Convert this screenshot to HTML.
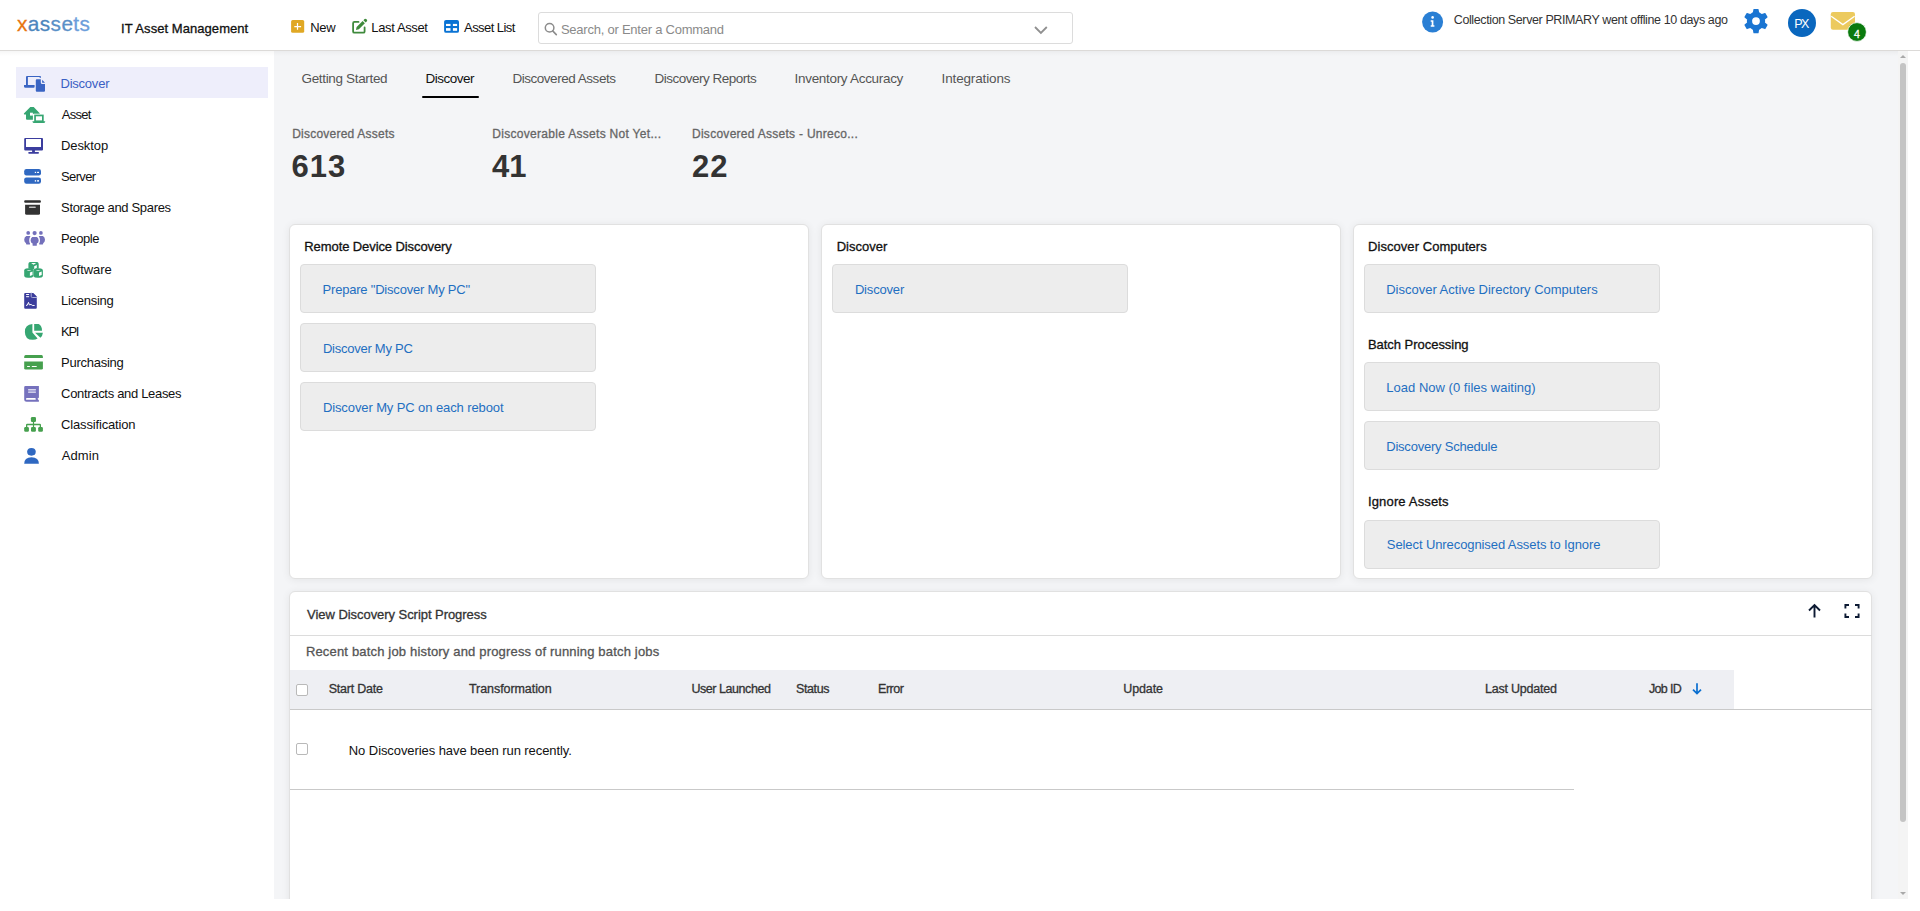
<!DOCTYPE html>
<html><head><meta charset="utf-8"><title>xAssets - Discover</title>
<style>
html,body{margin:0;padding:0;width:1920px;height:911px;overflow:hidden;background:#fff;font-family:"Liberation Sans",sans-serif;}
.t{position:absolute;white-space:nowrap;line-height:1.15;}
.abs{position:absolute;}
svg{position:absolute;overflow:visible;}
#header{position:absolute;left:0;top:0;width:1920px;height:50px;background:#fff;border-bottom:1px solid #dcdad8;}
#sidebar{position:absolute;left:0;top:51px;width:274px;height:848px;background:#fff;}
#main{position:absolute;left:274px;top:51px;width:1634px;height:848px;background:#f4f5f7;overflow:hidden;}
.navact{position:absolute;left:16px;top:67px;width:252px;height:31px;background:#eeeefb;}
.card{position:absolute;background:#fff;border:1px solid #e1e1e1;border-radius:6px;box-shadow:0 1px 8px rgba(0,0,0,.07);box-sizing:border-box;}
.btn{position:absolute;background:#ededed;border:1px solid #dcdcdc;border-radius:4px;box-sizing:border-box;}
.cb{position:absolute;width:12px;height:12px;border:1px solid #b9b9b9;border-radius:2px;box-sizing:border-box;background:#fff;}
</style></head>
<body>
<div id="header"></div>
<div id="sidebar"></div>
<div id="main"></div>
<div class="abs" style="left:0;top:51px;width:1908px;height:5px;background:linear-gradient(rgba(0,0,0,.035),rgba(0,0,0,0));"></div>
<div class="navact"></div>

<!-- tab underline -->
<div class="abs" style="left:422px;top:96px;width:57px;height:2px;background:#000;border-radius:1px;"></div>

<!-- cards -->
<div class="card" style="left:289px;top:224px;width:520px;height:355px;"></div>
<div class="card" style="left:821px;top:224px;width:520px;height:355px;"></div>
<div class="card" style="left:1353px;top:224px;width:520px;height:355px;"></div>

<div class="btn" style="left:300px;top:264px;width:296px;height:49px;"></div>
<div class="btn" style="left:300px;top:323px;width:296px;height:49px;"></div>
<div class="btn" style="left:300px;top:382px;width:296px;height:49px;"></div>
<div class="btn" style="left:832px;top:264px;width:296px;height:49px;"></div>
<div class="btn" style="left:1364px;top:264px;width:296px;height:49px;"></div>
<div class="btn" style="left:1364px;top:362px;width:296px;height:49px;"></div>
<div class="btn" style="left:1364px;top:421px;width:296px;height:49px;"></div>
<div class="btn" style="left:1364px;top:520px;width:296px;height:49px;"></div>

<!-- bottom card -->
<div class="card" style="left:289px;top:591px;width:1583px;height:340px;border-radius:6px 6px 0 0;"></div>
<div class="abs" style="left:290px;top:635px;width:1582px;height:1px;background:#dcdcdc;"></div>
<div class="abs" style="left:290px;top:670px;width:1444px;height:39px;background:#eeeff3;"></div>
<div class="abs" style="left:290px;top:709px;width:1582px;height:1px;background:#c9c9c9;"></div>
<div class="abs" style="left:290px;top:789px;width:1284px;height:1px;background:#c9c9c9;"></div>
<div class="cb" style="left:296px;top:684px;"></div>
<div class="cb" style="left:296px;top:743px;"></div>

<!-- bottom white strip over main -->
<div class="abs" style="left:0;top:899px;width:1920px;height:12px;background:#fff;"></div>
<div class="abs" style="left:1908px;top:51px;width:12px;height:848px;background:#fff;"></div>

<!-- scrollbar -->
<div class="abs" style="left:1898px;top:51px;width:10px;height:848px;background:#f4f4f4;"></div>
<div class="abs" style="left:1900px;top:63px;width:6px;height:759px;background:#c4c4c4;border-radius:3px;"></div>
<svg style="left:1898px;top:51px;" width="10" height="10"><path d="M2 7 L5 4 L8 7 Z" fill="#a9a9a9"/></svg>
<svg style="left:1898px;top:889px;" width="10" height="10"><path d="M2 3 L5 6 L8 3 Z" fill="#a9a9a9"/></svg>


<!-- ===== header icons ===== -->
<!-- logo -->
<div class="t" style="left:17px;top:11.8px;font-size:20.8px;line-height:1.15;letter-spacing:0.4px;"><span style="color:#e8740f;-webkit-text-stroke:0.3px #e8740f">x</span><span style="color:#4d86bd;-webkit-text-stroke:0.3px #4d86bd">as</span><span style="color:#5a90c8;-webkit-text-stroke:0.3px #5a90c8">se</span><span style="color:#6c9edb;-webkit-text-stroke:0.3px #6c9edb">ts</span></div>
<!-- New -->
<svg style="left:286px;top:14px" width="24" height="24"><rect x="5.1" y="5.9" width="13.1" height="12.9" rx="1.6" fill="#e0a824"/><path d="M8.3 12.6H15.1M11.5 9V15.8" stroke="#fff" stroke-width="1.2"/></svg>
<!-- Last Asset -->
<svg style="left:348px;top:14px" width="24" height="24"><path d="M10.5 7.9H6.4Q5.1 7.9 5.1 9.2V17.4Q5.1 18.7 6.4 18.7H15.3Q16.6 18.7 16.6 17.4V13.4" fill="none" stroke="#3f8a3c" stroke-width="1.8" stroke-linecap="round"/><path d="M8 15.9L8.6 13L14.6 7L16.9 9.3L10.9 15.3Z" fill="#3f8a3c"/><path d="M15.4 6.2L16.6 5Q17.5 4.3 18.4 5.2L18.8 5.6Q19.6 6.5 18.9 7.3L17.7 8.5Z" fill="#3f8a3c"/></svg>
<!-- Asset List -->
<svg style="left:440px;top:14px" width="24" height="24"><rect x="4.1" y="5.9" width="14.9" height="12.9" rx="1.9" fill="#0a73d4"/><rect x="6" y="9.9" width="4.5" height="2.1" fill="#fff"/><rect x="12.9" y="9.9" width="4.2" height="2.1" fill="#fff"/><rect x="6" y="14.1" width="4.5" height="2.7" fill="#fff"/><rect x="12.9" y="14.1" width="4.2" height="2.7" fill="#fff"/></svg>
<!-- search box -->
<div class="abs" style="left:538px;top:12px;width:535px;height:32px;border:1px solid #dcdcdc;border-radius:3px;box-sizing:border-box;background:#fff"></div>
<svg style="left:540px;top:18px" width="24" height="24"><circle cx="9.6" cy="9.8" r="4.3" fill="none" stroke="#8c8c8c" stroke-width="1.5"/><path d="M12.7 12.9L16.3 16.6" stroke="#8c8c8c" stroke-width="1.6" stroke-linecap="round"/></svg>
<svg style="left:1030px;top:20px" width="24" height="20"><path d="M5 7L10.9 13L16.8 7" fill="none" stroke="#909090" stroke-width="1.8"/></svg>
<!-- info -->
<svg style="left:1420px;top:10px" width="26" height="26"><circle cx="12.6" cy="12" r="10.5" fill="#2a7fd4"/><circle cx="12.6" cy="7.4" r="1.3" fill="#fff"/><path d="M10.7 10.3H13.4V15.3H14.4V16.7H10.7V15.3H11.7V11.7H10.7Z" fill="#fff"/></svg>
<!-- gear -->
<svg style="left:1741.3px;top:6px" width="30" height="30"><g transform="translate(15 15.05)" fill="#1a75d2"><circle r="9.2"/><path d="M-3.3 -7.8L-2.6 -11.6Q-2.5 -12.1 -2 -12.1H2Q2.5 -12.1 2.6 -11.6L3.3 -7.8Z" transform="rotate(0)"/><path d="M-3.3 -7.8L-2.6 -11.6Q-2.5 -12.1 -2 -12.1H2Q2.5 -12.1 2.6 -11.6L3.3 -7.8Z" transform="rotate(60)"/><path d="M-3.3 -7.8L-2.6 -11.6Q-2.5 -12.1 -2 -12.1H2Q2.5 -12.1 2.6 -11.6L3.3 -7.8Z" transform="rotate(120)"/><path d="M-3.3 -7.8L-2.6 -11.6Q-2.5 -12.1 -2 -12.1H2Q2.5 -12.1 2.6 -11.6L3.3 -7.8Z" transform="rotate(180)"/><path d="M-3.3 -7.8L-2.6 -11.6Q-2.5 -12.1 -2 -12.1H2Q2.5 -12.1 2.6 -11.6L3.3 -7.8Z" transform="rotate(240)"/><path d="M-3.3 -7.8L-2.6 -11.6Q-2.5 -12.1 -2 -12.1H2Q2.5 -12.1 2.6 -11.6L3.3 -7.8Z" transform="rotate(300)"/><circle r="3.9" fill="#fff"/></g></svg>
<!-- avatar -->
<div class="abs" style="left:1788px;top:9px;width:28px;height:28px;border-radius:50%;background:#0a67be"></div>
<!-- mail -->
<svg style="left:1830px;top:11px" width="40" height="34"><rect x="0.8" y="1.1" width="24.2" height="17.6" rx="2.2" fill="#ecca5e"/><path d="M1.2 5.3L12.9 13.6L24.6 5.3" fill="none" stroke="#fff" stroke-width="1.3"/><circle cx="27" cy="21" r="9.4" fill="#0a7a0e" stroke="#fff" stroke-width="0.8"/></svg>
<!-- tab underline already -->
<!-- ===== sidebar icons ===== -->
<svg style="left:20px;top:72px" width="30" height="24"><path d="M6 12.9V5Q6 3.95 7 3.95H20Q21 3.95 21 5V5.8H19.6V5.1H7.9V12.9Z" fill="#3a64c3"/><path d="M4 12.9H14.6V14.8Q14.6 15.8 13.6 15.8H5.4Q4 15.8 4 14.4Z" fill="#3a64c3"/><path d="M15.8 8.2Q15.8 7.2 16.8 7.2H20.8V10.6Q20.8 12.1 22.3 12.1H25V18.7Q25 19.7 24 19.7H16.8Q15.8 19.7 15.8 18.7Z" fill="#3a64c3" stroke="#eeeefb" stroke-width="1.6" paint-order="stroke"/><path d="M22.1 7.8L25 10.8H22.1Z" fill="#3a64c3"/></svg>
<svg style="left:20px;top:103px" width="30" height="24"><path d="M10.3 3.9H13.7L19.7 10.3L19.7 11H12.9V16.8H7Q6 16.8 6 15.8V11.6H4.5Q3.7 11.6 3.9 10.6Z" fill="#36a672"/><path d="M10 9.7H12.9V12.6H10Z" fill="#fff"/><rect x="13.4" y="10.7" width="12.6" height="10.1" fill="#fff"/><rect x="15.05" y="12.45" width="7.8" height="5.8" fill="none" stroke="#36a672" stroke-width="1.7"/><path d="M12.4 18.2H25.3L25 19.2Q24.8 20 24 20H13.7Q12.9 20 12.7 19.2Z" fill="#36a672"/></svg>
<svg style="left:20px;top:134px" width="30" height="24"><path d="M5.2 3.95H22Q23 3.95 23 5V15.6Q23 16.6 22 16.6H5.2Q4.2 16.6 4.2 15.6V5Q4.2 3.95 5.2 3.95ZM6 5V12.9H21V5Z" fill="#3b3d9e" fill-rule="evenodd"/><rect x="12.1" y="16" width="2.8" height="2.4" fill="#3b3d9e"/><rect x="8.2" y="17.9" width="10.8" height="1.8" rx="0.9" fill="#3b3d9e"/></svg>
<svg style="left:20px;top:165px" width="30" height="24"><rect x="4.2" y="3.95" width="16.8" height="6.55" rx="2.2" fill="#2f68c1"/><rect x="4.2" y="12.4" width="16.8" height="6.3" rx="2.2" fill="#2f68c1"/><rect x="14.8" y="6.8" width="1.3" height="1.2" fill="#fff"/><rect x="17.1" y="6.8" width="1.9" height="1.2" fill="#fff"/><rect x="14.8" y="15" width="1.3" height="1.7" fill="#dfe8f6"/><rect x="17.1" y="15" width="1.9" height="1.7" fill="#dfe8f6"/></svg>
<svg style="left:20px;top:196px" width="30" height="24"><rect x="4.2" y="4.2" width="16.7" height="2.6" rx="1" fill="#2e2e2e"/><path d="M5.1 8.7H20V17.3Q20 18.8 18.5 18.8H6.6Q5.1 18.8 5.1 17.3Z" fill="#333"/><rect x="8.9" y="10.4" width="7" height="1.6" rx="0.8" fill="#c0c0c0"/></svg>
<svg style="left:20px;top:227px" width="30" height="24" fill="#7370bb"><circle cx="8.2" cy="5.9" r="1.85"/><circle cx="14.6" cy="6.05" r="2.1"/><circle cx="20.9" cy="5.9" r="1.85"/><path d="M6.3 9.1H10.5Q9.2 10.8 9.2 13.3Q9.2 15.5 10.1 16.7Q10 17.6 9.3 17.6H6.7Q6 17.6 6 16.2Q4.2 14.9 4.2 12.7Q4.2 10.1 6.3 9.1Z"/><path d="M18.7 9.1H22.9Q25 10.1 25 12.7Q25 14.9 23.2 16.2Q23.2 17.6 22.5 17.6H19.9Q19.2 17.6 19.1 16.7Q20 15.5 20 13.3Q20 10.8 18.7 9.1Z"/><path d="M12.2 9.9H17Q18.7 10.9 18.7 13.4Q18.7 15.7 16.8 16.5V18.2Q16.8 18.7 16.3 18.7H13.1Q12.6 18.7 12.6 18.2V16.5Q10.6 15.7 10.6 13.4Q10.6 10.9 12.2 9.9Z"/></svg>
<svg style="left:20px;top:258px" width="30" height="24" fill="#36a672"><path d="M9.8 3.95H17.3Q18.7 4.3 18.7 6V10.4L13.6 11.4L8.4 10.4V6Q8.4 4.3 9.8 3.95Z"/><path d="M6 10.5Q8.8 9.9 11.7 10.5Q13.4 11 13.4 12.6V18.2Q12.5 19.7 9.6 19.7H8Q5.1 19.7 4.2 18.2V12.6Q4.2 11 6 10.5Z"/><path d="M15.2 10.5Q18.1 9.9 21 10.5Q22.9 11 22.9 12.6V18.2Q22 19.7 19.1 19.7H17.4Q14.4 19.7 13.4 18.2V12.6Q13.4 11 15.2 10.5Z"/><path d="M11.1 5.1H16.1L13.6 6.8Z" fill="#fff"/><path d="M14.2 8.3L16.8 7.1V10L14.2 11Z" fill="#fff"/><path d="M6.6 12.4Q8.9 11.6 11.3 12.4Q8.9 13.3 6.6 12.4Z" fill="#fff"/><path d="M9.9 14.4L12.5 13.6V17L9.9 18Z" fill="#fff"/><path d="M15.8 12.4Q18.1 11.6 20.5 12.4Q18.1 13.3 15.8 12.4Z" fill="#fff"/><path d="M19 14.4L21.7 13.6V17L19 18Z" fill="#fff"/></svg>
<svg style="left:20px;top:289px" width="30" height="24"><path d="M5.2 3.95H13.2L16.8 7.6V18.7Q16.8 19.7 15.8 19.7H5.2Q4.2 19.7 4.2 18.7V4.95Q4.2 3.95 5.2 3.95Z" fill="#3b3d9c"/><path d="M11.2 3.5V7.4Q11.2 8.5 12.3 8.5H17.2" fill="none" stroke="#aeb0d8" stroke-width="1"/><path d="M13 4.2L16.3 7.5H13Z" fill="#3b3d9c"/><rect x="6" y="5" width="3.2" height="1" rx="0.5" fill="#fff"/><rect x="6" y="7.1" width="3.2" height="1.2" rx="0.5" fill="#dcdcf0"/><path d="M6 16.4L7.3 16.2L8.5 13.4L9.4 15.9L11.1 15.4L12.2 16.4L14.6 16.5" fill="none" stroke="#fff" stroke-width="1"/></svg>
<svg style="left:20px;top:319px" width="30" height="24" fill="#36a672"><path d="M12.4 5Q4.9 5.4 4.9 12.9Q4.9 20.8 12.8 20.8Q15.8 20.8 17.6 19.4L12.4 13.6Z"/><path d="M14.2 5H18.6Q22 6.6 22 11.7H14.2Z"/><path d="M15.1 13.7H22.9Q22.6 16.7 20.4 18.7Z"/></svg>
<svg style="left:20px;top:350px" width="30" height="24" fill="#46a04e"><path d="M5.6 5.1H21.6Q22.9 5.3 22.9 6.8V8H4.2V6.8Q4.3 5.3 5.6 5.1Z"/><path d="M4.2 11.6H22.9V18.2Q22.9 19.6 21.5 19.6H5.6Q4.2 19.6 4.2 18.2Z"/><rect x="7" y="15.9" width="3" height="1.1" rx="0.5" fill="#fff"/><rect x="11.7" y="15.9" width="5.1" height="1.1" rx="0.5" fill="#fff"/></svg>
<svg style="left:20px;top:381px" width="30" height="24"><path d="M5.5 5H18.9V16.3Q18.9 16.6 18.6 16.9L17.4 17.8L18.9 19.2V20.8H6.7Q4.2 20.8 4.2 18.3V6.3Q4.2 5 5.5 5Z" fill="#7571bd"/><rect x="6" y="17" width="9.8" height="1.8" rx="0.9" fill="#fff"/><rect x="8.2" y="8" width="7.6" height="3.8" fill="#aaa8d8"/><rect x="8.2" y="8" width="7.6" height="1" fill="#d8d7ee"/><rect x="8.2" y="10.9" width="7.6" height="0.9" fill="#d8d7ee"/></svg>
<svg style="left:20px;top:412px" width="30" height="24" fill="#46a04e"><rect x="10.9" y="5" width="5.1" height="5.1" rx="1.3"/><rect x="12.9" y="9.5" width="1.2" height="6"/><path d="M7.2 11.8H19.8Q21 11.8 21 13V15.5H19.7V13.2H7.3V15.5H6V13Q6 11.8 7.2 11.8Z"/><rect x="4.2" y="15" width="4.7" height="4.7" rx="1.2"/><rect x="11" y="15" width="4.9" height="4.7" rx="1.2"/><rect x="18.2" y="15" width="4.7" height="4.7" rx="1.2"/></svg>
<svg style="left:20px;top:443px" width="30" height="24" fill="#2f68c1"><ellipse cx="11.45" cy="8.8" rx="4.3" ry="3.85"/><path d="M4.2 20.8Q4.2 14.2 11.5 14.2Q18.9 14.2 18.9 20.8Z"/></svg>
<!-- ===== bottom card icons ===== -->
<svg style="left:1804px;top:600px" width="20" height="22"><path d="M10.5 17.5V5.2M5 10.5L10.5 5L16 10.5" fill="none" stroke="#0d1a33" stroke-width="1.9"/></svg>
<svg style="left:1840px;top:600px" width="24" height="22"><path d="M5.4 8.5V5H9M15 5H18.6V8.5M18.6 13.5V17H15M9 17H5.4V13.5" fill="none" stroke="#0d1a33" stroke-width="1.9"/></svg>
<svg style="left:1688px;top:680px" width="18" height="18"><path d="M9 3.2V13.5M5 9.6L9 13.6L13 9.6" fill="none" stroke="#0a6fd0" stroke-width="1.7"/></svg>

<div class="t" id="t0" style="left:120.98px;top:21.72px;font-size:13px;color:#111;letter-spacing:0.057px;-webkit-text-stroke:0.3px #111;">IT Asset Management</div>
<div class="t" id="t1" style="left:310.24px;top:20.62px;font-size:13px;color:#111;letter-spacing:-0.320px;">New</div>
<div class="t" id="t2" style="left:371.32px;top:20.62px;font-size:13px;color:#111;letter-spacing:-0.369px;">Last Asset</div>
<div class="t" id="t3" style="left:464.02px;top:20.62px;font-size:13px;color:#111;letter-spacing:-0.558px;">Asset List</div>
<div class="t" id="t4" style="left:560.90px;top:22.72px;font-size:13px;color:#8a8a8a;letter-spacing:-0.236px;">Search, or Enter a Command</div>
<div class="t" id="t5" style="left:1453.75px;top:12.93px;font-size:12.5px;color:#333;letter-spacing:-0.388px;">Collection Server PRIMARY went offline 10 days ago</div>
<div class="t" id="t6" style="left:1794.20px;top:16.88px;font-size:12.5px;color:#fff;letter-spacing:-1.600px;">PX</div>
<div class="t" id="t7" style="left:1854.00px;top:28.02px;font-size:10.5px;color:#fff;-webkit-text-stroke:0.3px #fff;">4</div>
<div class="t" id="t8" style="left:60.48px;top:77.12px;font-size:13px;color:#3b5fc4;letter-spacing:-0.223px;">Discover</div>
<div class="t" id="t9" style="left:61.68px;top:108.12px;font-size:13px;color:#111;letter-spacing:-0.710px;">Asset</div>
<div class="t" id="t10" style="left:61.08px;top:139.12px;font-size:13px;color:#111;letter-spacing:-0.110px;">Desktop</div>
<div class="t" id="t11" style="left:61.08px;top:170.12px;font-size:13px;color:#111;letter-spacing:-0.648px;">Server</div>
<div class="t" id="t12" style="left:61.08px;top:201.12px;font-size:13px;color:#111;letter-spacing:-0.333px;">Storage and Spares</div>
<div class="t" id="t13" style="left:61.08px;top:232.12px;font-size:13px;color:#111;letter-spacing:-0.396px;">People</div>
<div class="t" id="t14" style="left:61.08px;top:263.12px;font-size:13px;color:#111;letter-spacing:-0.106px;">Software</div>
<div class="t" id="t15" style="left:61.08px;top:294.12px;font-size:13px;color:#111;letter-spacing:-0.280px;">Licensing</div>
<div class="t" id="t16" style="left:61.08px;top:325.12px;font-size:13px;color:#111;letter-spacing:-1.280px;">KPI</div>
<div class="t" id="t17" style="left:61.08px;top:356.12px;font-size:13px;color:#111;letter-spacing:-0.267px;">Purchasing</div>
<div class="t" id="t18" style="left:61.08px;top:387.12px;font-size:13px;color:#111;letter-spacing:-0.319px;">Contracts and Leases</div>
<div class="t" id="t19" style="left:61.08px;top:418.12px;font-size:13px;color:#111;letter-spacing:-0.165px;">Classification</div>
<div class="t" id="t20" style="left:61.68px;top:449.12px;font-size:13px;color:#111;letter-spacing:0.105px;">Admin</div>
<div class="t" id="t21" style="left:301.50px;top:71.26px;font-size:13.5px;color:#555;letter-spacing:-0.339px;">Getting Started</div>
<div class="t" id="t22" style="left:425.56px;top:71.26px;font-size:13.5px;color:#111;letter-spacing:-0.509px;">Discover</div>
<div class="t" id="t23" style="left:512.40px;top:71.26px;font-size:13.5px;color:#555;letter-spacing:-0.468px;">Discovered Assets</div>
<div class="t" id="t24" style="left:654.49px;top:71.26px;font-size:13.5px;color:#555;letter-spacing:-0.498px;">Discovery Reports</div>
<div class="t" id="t25" style="left:794.56px;top:71.26px;font-size:13.5px;color:#555;letter-spacing:-0.308px;">Inventory Accuracy</div>
<div class="t" id="t26" style="left:941.56px;top:71.26px;font-size:13.5px;color:#555;letter-spacing:-0.140px;">Integrations</div>
<div class="t" id="t27" style="left:292.16px;top:128.24px;font-size:12px;color:#666;letter-spacing:0.225px;-webkit-text-stroke:0.3px #666;">Discovered Assets</div>
<div class="t" id="t28" style="left:492.24px;top:128.24px;font-size:12px;color:#666;letter-spacing:0.299px;-webkit-text-stroke:0.3px #666;">Discoverable Assets Not Yet...</div>
<div class="t" id="t29" style="left:691.98px;top:128.24px;font-size:12px;color:#666;letter-spacing:0.278px;-webkit-text-stroke:0.3px #666;">Discovered Assets - Unreco...</div>
<div class="t" id="t30" style="left:291.60px;top:148.83px;font-size:31px;color:#333;letter-spacing:1.000px;font-weight:bold;">613</div>
<div class="t" id="t31" style="left:492.00px;top:148.83px;font-size:31px;color:#333;letter-spacing:-0.100px;font-weight:bold;">41</div>
<div class="t" id="t32" style="left:692.00px;top:148.83px;font-size:31px;color:#333;letter-spacing:0.900px;font-weight:bold;">22</div>
<div class="t" id="t33" style="left:304.32px;top:239.82px;font-size:13px;color:#111;letter-spacing:-0.091px;-webkit-text-stroke:0.3px #111;">Remote Device Discovery</div>
<div class="t" id="t34" style="left:836.70px;top:239.72px;font-size:13px;color:#111;-webkit-text-stroke:0.3px #111;">Discover</div>
<div class="t" id="t35" style="left:1368.00px;top:239.82px;font-size:13px;color:#111;letter-spacing:0.059px;-webkit-text-stroke:0.3px #111;">Discover Computers</div>
<div class="t" id="t36" style="left:1367.98px;top:337.92px;font-size:13px;color:#111;letter-spacing:-0.037px;-webkit-text-stroke:0.3px #111;">Batch Processing</div>
<div class="t" id="t37" style="left:1367.98px;top:495.12px;font-size:13px;color:#111;letter-spacing:0.155px;-webkit-text-stroke:0.3px #111;">Ignore Assets</div>
<div class="t" id="t38" style="left:322.55px;top:283.12px;font-size:13px;color:#1f6fc1;letter-spacing:-0.204px;">Prepare &quot;Discover My PC&quot;</div>
<div class="t" id="t39" style="left:322.90px;top:342.12px;font-size:13px;color:#1f6fc1;letter-spacing:-0.249px;">Discover My PC</div>
<div class="t" id="t40" style="left:322.90px;top:401.12px;font-size:13px;color:#1f6fc1;letter-spacing:-0.104px;">Discover My PC on each reboot</div>
<div class="t" id="t41" style="left:854.90px;top:283.12px;font-size:13px;color:#1f6fc1;letter-spacing:-0.174px;">Discover</div>
<div class="t" id="t42" style="left:1386.22px;top:283.12px;font-size:13px;color:#1f6fc1;letter-spacing:-0.006px;">Discover Active Directory Computers</div>
<div class="t" id="t43" style="left:1386.22px;top:381.12px;font-size:13px;color:#1f6fc1;letter-spacing:0.025px;">Load Now (0 files waiting)</div>
<div class="t" id="t44" style="left:1386.22px;top:440.12px;font-size:13px;color:#1f6fc1;letter-spacing:-0.214px;">Discovery Schedule</div>
<div class="t" id="t45" style="left:1386.82px;top:538.12px;font-size:13px;color:#1f6fc1;letter-spacing:-0.090px;">Select Unrecognised Assets to Ignore</div>
<div class="t" id="t46" style="left:307.10px;top:607.92px;font-size:13px;color:#333;letter-spacing:-0.052px;-webkit-text-stroke:0.3px #333;">View Discovery Script Progress</div>
<div class="t" id="t47" style="left:305.90px;top:644.62px;font-size:13px;color:#555;letter-spacing:0.173px;-webkit-text-stroke:0.3px #555;">Recent batch job history and progress of running batch jobs</div>
<div class="t" id="t48" style="left:328.75px;top:682.18px;font-size:12.5px;color:#333;letter-spacing:-0.224px;-webkit-text-stroke:0.3px #333;">Start Date</div>
<div class="t" id="t49" style="left:469.00px;top:682.18px;font-size:12.5px;color:#333;letter-spacing:-0.069px;-webkit-text-stroke:0.3px #333;">Transformation</div>
<div class="t" id="t50" style="left:691.42px;top:682.18px;font-size:12.5px;color:#333;letter-spacing:-0.443px;-webkit-text-stroke:0.3px #333;">User Launched</div>
<div class="t" id="t51" style="left:796.00px;top:682.18px;font-size:12.5px;color:#333;letter-spacing:-0.396px;-webkit-text-stroke:0.3px #333;">Status</div>
<div class="t" id="t52" style="left:878.00px;top:682.18px;font-size:12.5px;color:#333;letter-spacing:-0.455px;-webkit-text-stroke:0.3px #333;">Error</div>
<div class="t" id="t53" style="left:1123.34px;top:682.18px;font-size:12.5px;color:#333;letter-spacing:-0.136px;-webkit-text-stroke:0.3px #333;">Update</div>
<div class="t" id="t54" style="left:1484.90px;top:682.18px;font-size:12.5px;color:#333;letter-spacing:-0.204px;-webkit-text-stroke:0.3px #333;">Last Updated</div>
<div class="t" id="t55" style="left:1649.02px;top:682.18px;font-size:12.5px;color:#333;letter-spacing:-0.672px;-webkit-text-stroke:0.3px #333;">Job ID</div>
<div class="t" id="t56" style="left:348.82px;top:743.72px;font-size:13px;color:#111;letter-spacing:-0.076px;">No Discoveries have been run recently.</div>

</body></html>
